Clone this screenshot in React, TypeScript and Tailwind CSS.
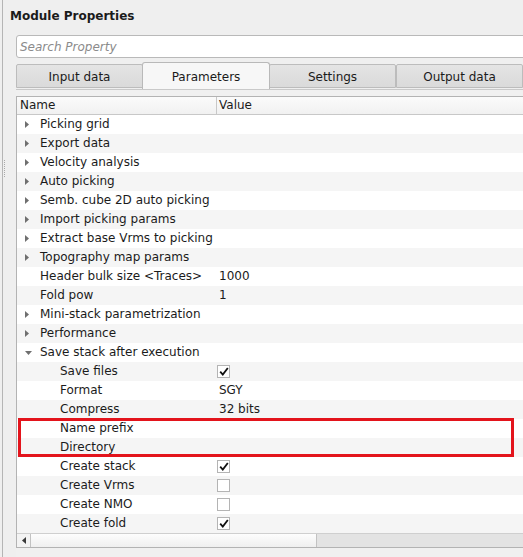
import React from 'react';

type Row = {
  label: string;
  level: 0 | 1;
  arrow?: 'closed' | 'open';
  value?: string;
  check?: boolean;
};

const rows: Row[] = [
  { label: 'Picking grid', level: 0, arrow: 'closed' },
  { label: 'Export data', level: 0, arrow: 'closed' },
  { label: 'Velocity analysis', level: 0, arrow: 'closed' },
  { label: 'Auto picking', level: 0, arrow: 'closed' },
  { label: 'Semb. cube 2D auto picking', level: 0, arrow: 'closed' },
  { label: 'Import picking params', level: 0, arrow: 'closed' },
  { label: 'Extract base Vrms to picking', level: 0, arrow: 'closed' },
  { label: 'Topography map params', level: 0, arrow: 'closed' },
  { label: 'Header bulk size <Traces>', level: 0, value: '1000' },
  { label: 'Fold pow', level: 0, value: '1' },
  { label: 'Mini-stack parametrization', level: 0, arrow: 'closed' },
  { label: 'Performance', level: 0, arrow: 'closed' },
  { label: 'Save stack after execution', level: 0, arrow: 'open' },
  { label: 'Save files', level: 1, check: true },
  { label: 'Format', level: 1, value: 'SGY' },
  { label: 'Compress', level: 1, value: '32 bits' },
  { label: 'Name prefix', level: 1 },
  { label: 'Directory', level: 1 },
  { label: 'Create stack', level: 1, check: true },
  { label: 'Create Vrms', level: 1, check: false },
  { label: 'Create NMO', level: 1, check: false },
  { label: 'Create fold', level: 1, check: true },
];

const tabs = ['Input data', 'Parameters', 'Settings', 'Output data'];

function Arrow({ open }: { open: boolean }) {
  return open ? (
    <svg width="7" height="4" viewBox="0 0 7 4">
      <path d="M0 0 H7 L3.5 4 Z" fill="#6f6f6f" />
    </svg>
  ) : (
    <svg width="4" height="7" viewBox="0 0 4 7">
      <path d="M0 0 L4 3.5 L0 7 Z" fill="#6f6f6f" />
    </svg>
  );
}

function CheckBox({ checked }: { checked: boolean }) {
  return (
    <div className="w-[13px] h-[13px] border border-[#b4b4b4] bg-white flex items-center justify-center">
      {checked && (
        <svg width="10" height="9" viewBox="0 0 10 9">
          <path d="M1.2 4.6 L3.8 7.6 L8.8 1" fill="none" stroke="#111" strokeWidth="1.8" />
        </svg>
      )}
    </div>
  );
}

export default function App() {
  return (
    <div className="relative w-[523px] h-[557px] overflow-hidden bg-[#efefef] text-[12px] text-[#1b1b1b] font-['DejaVu_Sans','Liberation_Sans',sans-serif]">
      {/* splitter handle */}
      <div className="absolute left-[4px] top-[160px] h-[17px] border-l border-dotted border-[#a9a9a9]" />

      <div className="ml-[2px] h-full border-l border-[#b5b5b5] flex flex-col">
        <div className="pl-[7px] pt-[8px] h-[24px] leading-[17px] font-bold">Module Properties</div>

        <div className="ml-[13px] mt-[11px] w-[520px] h-[23px] bg-white border border-[#b9b9b9] rounded-[3px] flex items-center pl-[3px] italic text-[#8b8b8b]">
          Search Property
        </div>

        {/* tabs */}
        <div className="ml-[13px] mt-[4px] h-[27px] flex items-end">
          {tabs.map((t, i) =>
            i === 1 ? (
              <div
                key={t}
                className="w-[128px] -mx-px h-[27px] z-10 bg-[#f7f7f7] border border-b-0 border-[#b9b9b9] rounded-t-[3px] flex items-center justify-center pt-[1px]"
              >
                {t}
              </div>
            ) : (
              <div
                key={t}
                className="w-[127px] h-[24px] mb-[1px] bg-gradient-to-b from-[#e4e4e4] to-[#dadada] border border-[#bcbcbc] rounded-t-[2px] flex items-center justify-center pt-[2px]"
              >
                {t}
              </div>
            )
          )}
        </div>

        {/* pane */}
        <div className="ml-[13px] w-[530px] flex-1 border-t border-[#c9c9c9] bg-[#f0f0f0] pt-[6px] flex flex-col">
          <div className="w-[530px] border border-[#b3b3b3] bg-white flex flex-col">
            <div className="h-[18px] flex border-b border-[#c8c8c8] bg-gradient-to-b from-[#fbfbfb] to-[#f1f1f1] leading-[17px]">
              <div className="w-[200px] pl-[3px] border-r border-[#c8c8c8]">Name</div>
              <div className="pl-[2px]">Value</div>
            </div>

            {rows.map((r, i) => (
              <div
                key={r.label}
                className={`h-[19px] flex items-center leading-[19px] ${i % 2 === 0 ? 'bg-white' : 'bg-[#f5f5f5]'}`}
              >
                <div className="w-[200px] flex items-center">
                  {r.level === 0 ? (
                    <div className="w-[23px] pl-[8px] flex items-center">
                      {r.arrow && <Arrow open={r.arrow === 'open'} />}
                    </div>
                  ) : (
                    <div className="w-[43px]" />
                  )}
                  <span className="whitespace-nowrap">{r.label}</span>
                </div>
                <div className="flex items-center">
                  {r.check !== undefined ? (
                    <CheckBox checked={r.check} />
                  ) : (
                    r.value && <span className="pl-[2px]">{r.value}</span>
                  )}
                </div>
              </div>
            ))}

            {/* horizontal scrollbar */}
            <div className="h-[14px] flex border-t border-[#cfcfcf] bg-[#e3e3e3]">
              <div className="w-[13px] flex items-center justify-center bg-[#f3f3f3]">
                <svg width="4" height="7" viewBox="0 0 4 7">
                  <path d="M4 0 L0 3.5 L4 7 Z" fill="#3a3a3a" />
                </svg>
              </div>
              <div className="w-[287px] border-l border-r border-[#c2c2c2] bg-gradient-to-b from-[#fdfdfd] to-[#efefef]" />
            </div>
          </div>
        </div>
      </div>

      {/* highlight annotation */}
      <div className="absolute left-[18px] top-[418px] w-[496px] h-[39px] border-[3px] border-[#e3141c]" />
    </div>
  );
}
